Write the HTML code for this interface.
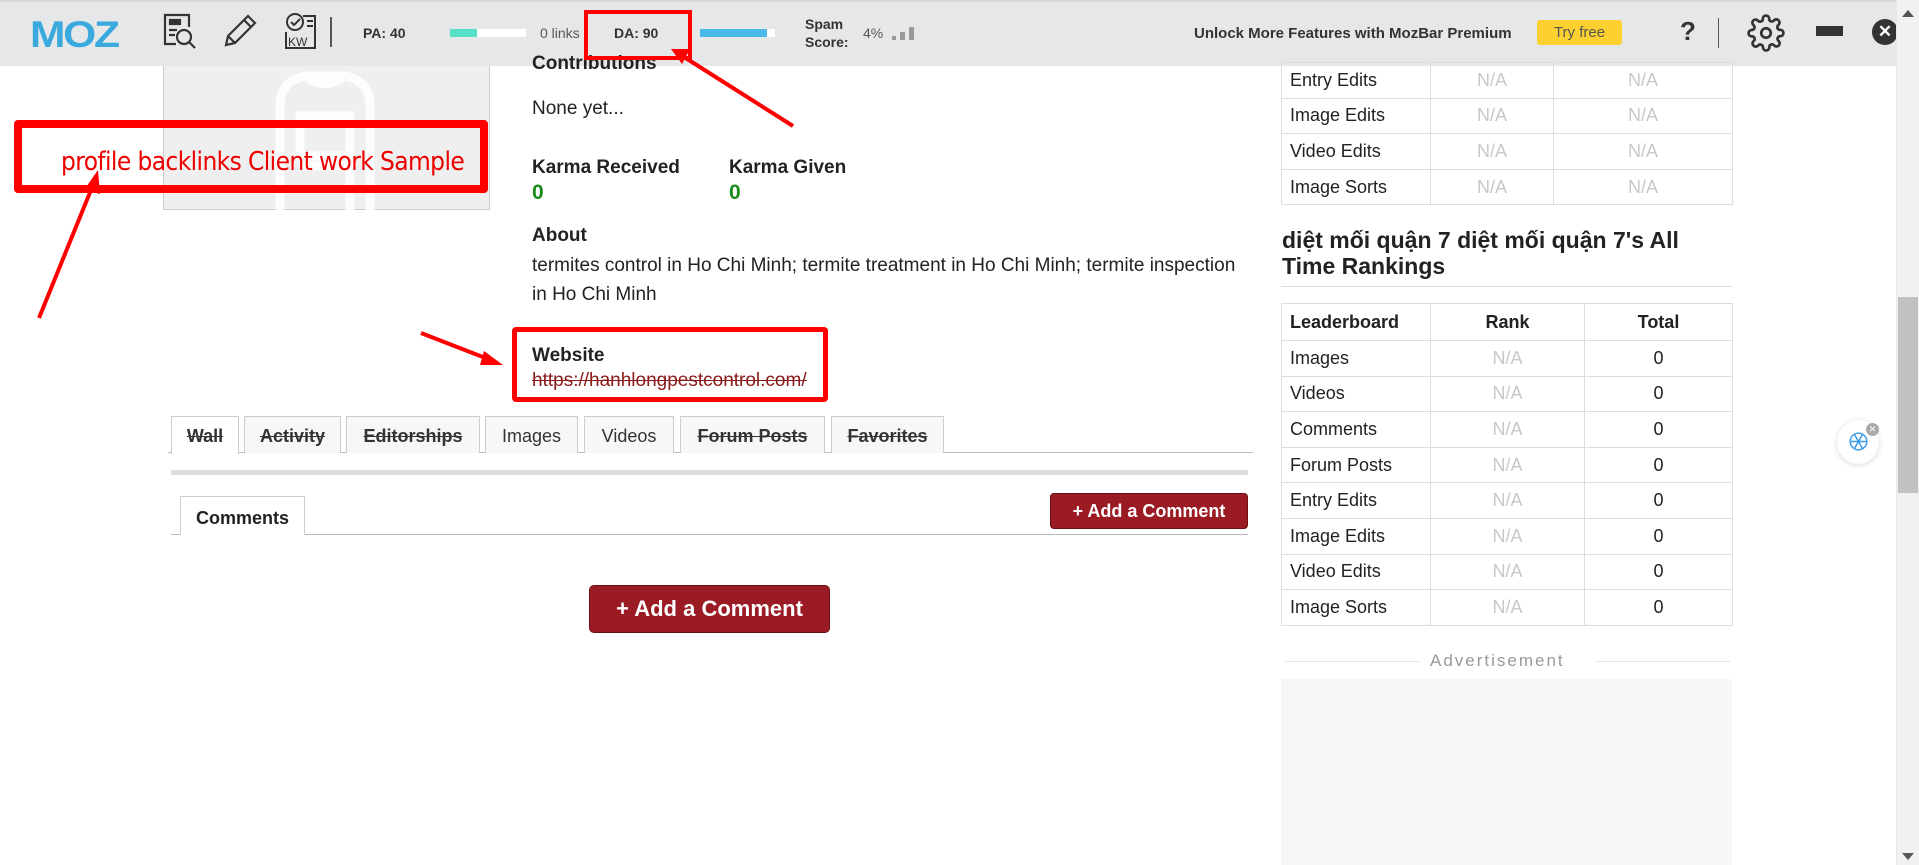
<!DOCTYPE html>
<html><head><meta charset="utf-8"><style>
*{margin:0;padding:0;box-sizing:border-box}
body{width:1919px;height:865px;overflow:hidden;background:#fff;font-family:"Liberation Sans",Arial,sans-serif;position:relative;color:#222}
.a{position:absolute}
.bar{left:0;top:0;width:1896px;height:66px;background:#e6e7e8;border-top:2px solid #d9dadb}
.mb{font-weight:bold;font-size:14px;color:#333}
.t{font-size:19px;color:#222}
.b{font-weight:bold}
.tab{top:416px;height:37px;border:1px solid #ccc;border-bottom:none;font-size:18px;text-align:center;line-height:38px;color:#333;background:#fff}
.s{text-decoration:line-through}
table{border-collapse:collapse;font-size:18px}
td{border:1px solid #ddd;height:35.6px;padding:0 8px}
td.c{text-align:center}
.na{color:#c8c8c8}
.btn{background:#9b1b24;color:#fff;font-weight:bold;text-align:center;border-radius:4px;border:1px solid #6e0f15}
.rb{border:6px solid #f00;border-radius:4px}
</style></head><body>
<div class="a bar"></div>
<div class="a" style="left:30px;top:14px;font:900 37px 'Liberation Sans',sans-serif;color:#3aa9dd;letter-spacing:-2px;transform:scaleX(1.15);transform-origin:left">MOZ</div>
<svg class="a" style="left:162px;top:13px" width="38" height="38" viewBox="0 0 38 38" fill="none" stroke="#333" stroke-width="2.2"><path d="M14 31H3V2h24v12"/><rect x="8" y="7" width="10" height="4" fill="#333"/><path d="M7 17h8M7 22h6"/><circle cx="22" cy="24" r="7"/><path d="M27 29l6 6"/></svg>
<svg class="a" style="left:222px;top:13px" width="36" height="36" viewBox="0 0 36 36" fill="none" stroke="#333" stroke-width="2.2"><path d="M4 32l2-9L26 3l7 7-20 20z M6 23l7 7 M22 7l7 7"/></svg>
<svg class="a" style="left:283px;top:12px" width="34" height="38" viewBox="0 0 34 38" fill="none" stroke="#333" stroke-width="2"><circle cx="12" cy="10" r="8"/><path d="M8 10l3 3 6-6M20 4h12v32H3V20M24 9h6M24 14h6"/><text x="5" y="34" font-size="12" fill="#333" stroke="none" font-family="Liberation Sans">KW</text></svg>
<div class="a" style="left:330px;top:17px;width:2px;height:30px;background:#555"></div>
<div class="a mb" style="left:363px;top:25px">PA: 40</div>
<div class="a" style="left:450px;top:29px;width:76px;height:8px;background:#fff"><div style="width:27px;height:8px;background:#55e0c8"></div></div>
<div class="a" style="left:540px;top:25px;font-size:14px;color:#555">0 links</div>
<div class="a mb" style="left:614px;top:25px">DA: 90</div>
<div class="a" style="left:700px;top:29px;width:75px;height:8px;background:#fff"><div style="width:67px;height:8px;background:#4bb9e8"></div></div>
<div class="a mb" style="left:805px;top:15px;line-height:18px">Spam<br>Score:</div>
<div class="a" style="left:863px;top:25px;font-size:14px;color:#555">4%</div>
<div class="a" style="left:892px;top:36px;width:4px;height:4px;background:#999"></div>
<div class="a" style="left:900px;top:32px;width:5px;height:8px;background:#999"></div>
<div class="a" style="left:909px;top:27px;width:5px;height:13px;background:#999"></div>
<div class="a mb" style="left:1194px;top:25px;font-size:15px">Unlock More Features with MozBar Premium</div>
<div class="a" style="left:1537px;top:20px;width:85px;height:25px;background:#fcd02e;border-radius:3px;color:#555;font-size:15px;text-align:center;line-height:25px">Try free</div>
<div class="a" style="left:1680px;top:16px;font:bold 26px 'Liberation Sans';color:#333">?</div>
<div class="a" style="left:1718px;top:18px;width:1px;height:30px;background:#555"></div>
<svg class="a" style="left:1747px;top:14px" width="38" height="38" viewBox="0 0 24 24" fill="none" stroke="#333" stroke-width="1.7"><circle cx="12" cy="12" r="3"/><path d="M19.4 15a1.7 1.7 0 0 0 .3 1.8l.1.1a2 2 0 1 1-2.8 2.8l-.1-.1a1.7 1.7 0 0 0-1.8-.3 1.7 1.7 0 0 0-1 1.5V21a2 2 0 1 1-4 0v-.1a1.7 1.7 0 0 0-1.1-1.5 1.7 1.7 0 0 0-1.8.3l-.1.1a2 2 0 1 1-2.8-2.8l.1-.1a1.7 1.7 0 0 0 .3-1.8 1.7 1.7 0 0 0-1.5-1H3a2 2 0 1 1 0-4h.1a1.7 1.7 0 0 0 1.5-1.1 1.7 1.7 0 0 0-.3-1.8l-.1-.1a2 2 0 1 1 2.8-2.8l.1.1a1.7 1.7 0 0 0 1.8.3H9a1.7 1.7 0 0 0 1-1.5V3a2 2 0 1 1 4 0v.1a1.7 1.7 0 0 0 1 1.5 1.7 1.7 0 0 0 1.8-.3l.1-.1a2 2 0 1 1 2.8 2.8l-.1.1a1.7 1.7 0 0 0-.3 1.8V9a1.7 1.7 0 0 0 1.5 1H21a2 2 0 1 1 0 4h-.1a1.7 1.7 0 0 0-1.5 1z"/></svg>
<div class="a" style="left:1816px;top:26px;width:27px;height:10px;background:#333"></div>
<div class="a" style="left:1872px;top:19px;width:26px;height:26px;border-radius:50%;background:#333;color:#fff;font:bold 17px 'Liberation Sans';text-align:center;line-height:26px">✕</div>
<!-- scrollbar -->
<div class="a" style="left:1896px;top:0;width:23px;height:865px;background:#f1f1f1;border-left:1px solid #e8e8e8"></div>
<div class="a" style="left:1898px;top:297px;width:20px;height:196px;background:#c1c1c1"></div>
<div class="a" style="left:1902px;top:10px;border:6px solid transparent;border-bottom:7px solid #555;border-top:none"></div>
<div class="a" style="left:1902px;top:853px;border:6px solid transparent;border-top:7px solid #555;border-bottom:none"></div>
<!-- avatar -->
<div class="a" style="left:163px;top:66px;width:327px;height:144px;background:#efefef;border:1px solid #ccc;border-top:none"></div>
<svg class="a" style="left:250px;top:66px" width="150" height="144" viewBox="0 0 150 144" fill="none" stroke="#fff" stroke-width="9" opacity=".9"><path d="M30 144V40q0-25 25-30h40q25 5 25 30v104M55 10q20 15 40 0M50 50h50v40H50zM50 100h50v44"/></svg>
<div class="a rb" style="left:14px;top:120px;width:474px;height:73px;border-width:8px"></div>
<div class="a" style="left:61px;top:147px;font:26px 'DejaVu Sans Condensed','Liberation Sans Narrow','Liberation Sans',sans-serif;color:#e00;letter-spacing:-.6px">profile backlinks Client work Sample</div>
<!-- main -->
<div class="a t b" style="left:532px;top:53px">Contributions</div>
<div class="a t" style="left:532px;top:98px">None yet...</div>
<div class="a t b" style="left:532px;top:157px">Karma Received</div>
<div class="a t b" style="left:532px;top:181px;color:#1a8a1a;font-size:21px">0</div>
<div class="a t b" style="left:729px;top:157px">Karma Given</div>
<div class="a t b" style="left:729px;top:181px;color:#1a8a1a;font-size:21px">0</div>
<div class="a t b" style="left:532px;top:225px">About</div>
<div class="a t" style="left:532px;top:251px;width:712px;line-height:29px">termites control in Ho Chi Minh; termite treatment in Ho Chi Minh; termite inspection in Ho Chi Minh</div>
<div class="a t b" style="left:532px;top:345px">Website</div>
<div class="a t s" style="left:532px;top:370px;color:#8b1a1a">https://hanhlongpestcontrol.com/</div>
<div class="a rb" style="left:512px;top:327px;width:316px;height:75px;border-width:5px"></div>
<!-- tabs -->
<div class="a" style="left:168px;top:452px;width:1085px;height:1px;background:#bbb"></div>
<div class="a tab b s" style="left:171px;width:68px;height:38px">Wall</div>
<div class="a tab b s" style="left:244px;width:97px;background:#f7f7f7">Activity</div>
<div class="a tab b s" style="left:346px;width:134px;background:#f7f7f7">Editorships</div>
<div class="a tab" style="left:485px;width:93px;background:#f7f7f7">Images</div>
<div class="a tab" style="left:584px;width:90px;background:#f7f7f7">Videos</div>
<div class="a tab b s" style="left:680px;width:145px;background:#f7f7f7">Forum Posts</div>
<div class="a tab b s" style="left:831px;width:113px;background:#f7f7f7">Favorites</div>
<div class="a" style="left:171px;top:470px;width:1077px;height:5px;background:#ddd"></div>
<div class="a" style="left:171px;top:534px;width:1077px;height:1px;background:#bbb"></div>
<div class="a" style="left:180px;top:496px;width:125px;height:39px;border:1px solid #ccc;border-bottom:none;background:#fff;font-size:18px;font-weight:bold;text-align:center;line-height:42px">Comments</div>
<div class="a btn" style="left:1050px;top:493px;width:198px;height:36px;font-size:18px;line-height:34px">+ Add a Comment</div>
<div class="a btn" style="left:589px;top:585px;width:241px;height:48px;font-size:22px;line-height:46px;border-radius:5px">+ Add a Comment</div>
<!-- right -->
<table class="a" style="left:1281px;top:62px;width:452px">
<tr><td style="width:149px">Entry Edits</td><td class="c na" style="width:123px">N/A</td><td class="c na">N/A</td></tr>
<tr><td>Image Edits</td><td class="c na">N/A</td><td class="c na">N/A</td></tr>
<tr><td>Video Edits</td><td class="c na">N/A</td><td class="c na">N/A</td></tr>
<tr><td>Image Sorts</td><td class="c na">N/A</td><td class="c na">N/A</td></tr>
</table>
<div class="a b" style="left:1282px;top:227px;font-size:23px;line-height:26px;width:420px">diệt mối quận 7 diệt mối quận 7's All Time Rankings</div>
<div class="a" style="left:1281px;top:286px;width:451px;height:1px;background:#ddd"></div>
<table class="a" style="left:1281px;top:303px;width:452px">
<tr><td class="b" style="width:149px;height:37px">Leaderboard</td><td class="c b" style="width:154px">Rank</td><td class="c b">Total</td></tr>
<tr><td>Images</td><td class="c na">N/A</td><td class="c">0</td></tr>
<tr><td>Videos</td><td class="c na">N/A</td><td class="c">0</td></tr>
<tr><td>Comments</td><td class="c na">N/A</td><td class="c">0</td></tr>
<tr><td>Forum Posts</td><td class="c na">N/A</td><td class="c">0</td></tr>
<tr><td>Entry Edits</td><td class="c na">N/A</td><td class="c">0</td></tr>
<tr><td>Image Edits</td><td class="c na">N/A</td><td class="c">0</td></tr>
<tr><td>Video Edits</td><td class="c na">N/A</td><td class="c">0</td></tr>
<tr><td>Image Sorts</td><td class="c na">N/A</td><td class="c">0</td></tr>
</table>
<div class="a" style="left:1285px;top:661px;width:135px;height:1px;background:#e5e5e5"></div>
<div class="a" style="left:1595px;top:661px;width:135px;height:1px;background:#e5e5e5"></div>
<div class="a" style="left:1430px;top:651px;font-size:17px;color:#999;letter-spacing:2px">Advertisement</div>
<div class="a" style="left:1281px;top:679px;width:451px;height:186px;background:#f7f7f7"></div>
<!-- widget -->
<div class="a" style="left:1837px;top:420px;width:42px;height:44px;border-radius:50%;background:#fff;box-shadow:0 1px 6px rgba(0,0,0,.15)"></div>
<svg class="a" style="left:1846px;top:429px" width="25" height="25" viewBox="0 0 24 24" fill="none" stroke="#3b9be8" stroke-width="1.4"><circle cx="12" cy="12" r="8"/><path d="M8 5l8 14M16 5L8 19M4 12h16"/></svg>
<div class="a" style="left:1866px;top:423px;width:13px;height:13px;border-radius:50%;background:#aaa;color:#fff;font-size:9px;text-align:center;line-height:13px">✕</div>
<!-- arrows -->
<svg class="a" style="left:0;top:0;z-index:3" width="1919" height="865" fill="#f00" stroke="#f00">
<line x1="39" y1="318" x2="93" y2="185" stroke-width="4"/><polygon points="98,170 84,190 100,194" stroke="none"/>
<line x1="793" y1="126" x2="684" y2="57" stroke-width="4"/><polygon points="671,49 690,49 682,64" stroke="none"/>
<line x1="421" y1="333" x2="488" y2="359" stroke-width="4"/><polygon points="503,365 484,351 480,365" stroke="none"/>
<rect x="586" y="12" width="104" height="46" fill="none" stroke-width="4"/>
</svg>
</body></html>
